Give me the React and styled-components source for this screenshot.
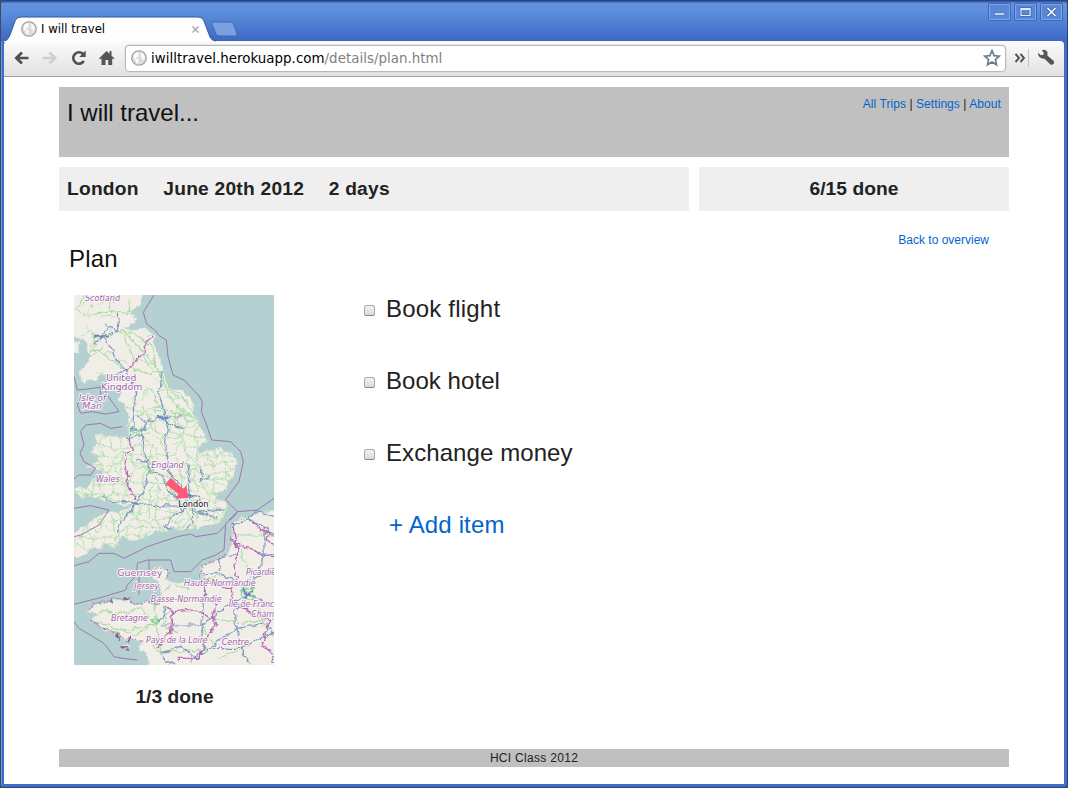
import React from 'react';
import styled, { createGlobalStyle } from 'styled-components';

const Global = createGlobalStyle`
  * { box-sizing: border-box; }
  body { margin: 0; background: #4a4a4c; overflow: hidden; }
`;
const Window = styled.div`
  width: 1068px; height: 788px; display: flex; flex-direction: column;
  background: #3f6dc6; border: 1px solid #27457f; border-left-color: #3c4a66;
  border-radius: 5px 5px 4px 4px; padding: 0 3px 3px 3px;
  font-family: 'Liberation Sans', Arial, sans-serif; color: #222;
  box-shadow: inset 1px 0 #6c99e4;
`;
const TitleBar = styled.div`
  height: 40px; flex: none; display: flex; justify-content: space-between; align-items: flex-start;
  margin: 0 -3px; padding: 0 4px 0 3px;
  background: linear-gradient(#315cab 0 1px, #6492df 2px, #5f8fdc 10px, #4370ca 34px, #3c68c0);
  border-radius: 4px 4px 0 0;
`;
const TabStrip = styled.div`display: flex; position: relative; height: 41px; width: 240px;`;
const TabShape = styled.svg`position: absolute; left: 0; top: 0;`;
const TabLabel = styled.div`
  position: relative; display: flex; align-items: center; height: 20px; margin-top: 18px; padding-left: 17px;
  font: 11.7px/20px 'DejaVu Sans', sans-serif; color: #000; width: 196px;
  svg + span { margin-left: 4px; flex: 1; }
`;
const WindowButtons = styled.div`display: flex; gap: 3px; padding-top: 2px;`;
const WindowButton = styled.div`
  width: 23px; height: 18px; border: 1px solid #3a67b8; border-radius: 2px;
  box-shadow: inset 0 0 0 1px #7da5e8; background: #5a87d7; display: grid; place-items: center;
`;
const Toolbar = styled.div`
  height: 36px; flex: none; display: flex; align-items: center; padding: 0 8px 1px 9px;
  background: linear-gradient(#fbfbfb, #e1e1e1); border-bottom: 1px solid #a3a3a3; border-radius: 4px 4px 0 0;
`;
const NavIcons = styled.div`display: flex; width: 112px;`;
const NavIcon = styled.svg`width: 18px; height: 18px; margin-right: 10.3px; flex: none;`;
const AddressBar = styled.div`
  width: 881px; height: 27px; border: 1px solid #b9b9b9; border-radius: 4px; background: #fff;
  box-shadow: 0 0 0 .5px #d8d8d8; display: flex; align-items: center; padding: 0 4px 0 5px;
  font: 13.4px/25px 'DejaVu Sans', sans-serif; letter-spacing: .025px; color: #808080;
  b { font-weight: 400; color: #000; }
`;
const Url = styled.span`flex: 1; margin-left: 4px;`;
const MoreIcons = styled.div`display: flex; align-items: center; margin-left: 8px;`;
const Separator = styled.i`width: 1px; height: 18px; background: #c4c4c4; margin: 0 8px 0 2px;`;
const Page = styled.div`flex: 1; background: #fff; padding: 10px 55px 0; overflow: hidden;`;
const Header = styled.header`
  height: 70px; background: #c0c0c0; padding: 11px 8px; display: flex; justify-content: space-between;
`;
const Title = styled.h1`margin: 0; font-size: 24px; font-weight: 400; line-height: 30px; color: #111;`;
const Links = styled.nav`font-size: 12px; line-height: 12px; white-space: pre; letter-spacing: .07px;`;
const Link = styled.a`color: #06c;`;
const Summary = styled.div`display: flex; gap: 10px; margin-top: 10px;`;
const SummaryBox = styled.div`
  width: ${p => p.$width}px; height: 44px; background: #efefef; display: flex; gap: 24.6px; padding: 0 8px;
  justify-content: ${p => (p.$center ? 'center' : 'flex-start')};
  font-size: 19.2px; line-height: 43px; font-weight: 700; letter-spacing: ${p => (p.$center ? 0.08 : 0.23)}px;
`;
const Heading = styled.div`display: flex; justify-content: space-between; padding: 22px 20px 0 10px; height: 84px;`;
const PlanTitle = styled.h2`margin: 11px 0 0; font-size: 24px; font-weight: 400; line-height: 30px; color: #111; letter-spacing: .15px;`;
const BackLink = styled(Link)`font-size: 12px; line-height: 14px;`;
const Content = styled.main`display: flex; height: 454px;`;
const MapColumn = styled.section`width: 200px; margin-left: 15px;`;
const MapCaption = styled.p`margin: 20px 0 0; text-align: center; font-size: 19.2px; line-height: 24px; font-weight: 700; letter-spacing: .05px; padding-left: 1px;`;
const MapPicture = styled.svg`display: block; width: 200px; height: 370px;`;
const List = styled.div`margin-left: 90px; font-size: 24px; line-height: 28px;`;
const Item = styled.label`display: flex; align-items: center; height: 28px; margin-bottom: 44px; letter-spacing: ${p => p.$spacing || 0}px;`;
const Check = styled.span`
  width: 11px; height: 11px; margin: 3px 11px 0 0; border: 1px solid #a9a9a9; border-bottom-color: #858585;
  border-radius: 2.5px; background: linear-gradient(#f3f3f3, #d9d9d9);
`;
const AddItem = styled(Link)`display: block; padding-left: 25px; letter-spacing: .15px;`;
const Footer = styled.footer`height: 18px; background: #c0c0c0; text-align: center; font-size: 12px; line-height: 18px; letter-spacing: .3px;`;

const Globe = () => (
  <svg width="16" height="16" viewBox="0 0 16 16">
    <circle cx="8" cy="8" r="7.3" fill="#dcdcdc" stroke="#999" strokeWidth="1.1" />
    <path d="M2.2 5.5 4 3 6.5 2 8.3 3 7 4.5 8 6 6.3 7.3 5 7 5.2 8.6 7.6 9.6 8 11 6.5 14 5.4 13.5 5 10.5 2.8 8.5Z M10 2.5 12.5 4 14 7 13.2 9.6 12 10.8 11.3 8.5 9.8 7.5 10.5 5.5 9.6 4.2Z" fill="#fafafa" />
  </svg>
);

const britain = 'M-20 -20H208V0L200 30 180 47 165 57 185 70 180 85 150 100 170 107 200 100 225 107 245 120 235 137 255 185 270 225 280 275 320 283 340 305 358 328 352 352 372 380 385 405 400 440 372 460 375 480 400 465 440 460 475 475 487 500 480 540 460 560 455 585 425 600 420 615 460 615 457 642 450 670 430 685 390 695 350 705 320 707 290 695 270 710 240 706 220 728 185 733 170 742 150 720 133 735 125 760 100 750 50 765 15 788 -20 790V715L0 715 40 690 80 655 140 650 183 628 150 632 110 622 80 616 50 600 20 605 5 595 5 580 40 575 60 555 95 525 60 520 40 515 75 500 65 475 45 475 70 445 60 420 85 420 130 425 165 430 160 400 165 370 150 330 130 315 145 290 110 285 90 275 110 255 150 250 130 235 90 240 60 255 70 262 45 250 30 267 15 235 20 225 40 205 50 180 30 135 10 125 -20 130Z';
const france = 'M630 640 575 650 530 662 480 680 475 700 477 735 470 755 460 780 420 797 380 820 375 840 400 850 380 856 340 860 300 865 280 850 283 825 262 818 238 820 235 830 242 850 255 870 260 895 268 925 240 932 220 920 180 930 160 910 155 920 120 915 90 925 50 932 42 950 75 960 50 975 75 982 77 997 90 1005 130 1012 155 1035 205 1040 195 1068 220 1080 228 1130H630Z';

// Minor roads form an irregular mesh that is clipped to the coastline.
const minorRoads = (() => {
  let seed = 17;
  const rnd = () => (seed = (seed * 16807) % 2147483647) / 2147483647;
  const pts = [];
  for (let r = 0; r < 29; r++) {
    pts.push([]);
    for (let c = 0; c < 19; c++) pts[r].push([Math.round(c * 28 - 10 + rnd() * 24), Math.round(r * 28 - 10 + rnd() * 24)]);
  }
  let d = '';
  for (let r = 0; r < 28; r++) for (let c = 0; c < 18; c++) {
    const dense = r > 11 ? 0.8 : 0.18;
    const [x, y] = pts[r][c];
    const go = q => { d += `M${x} ${y}Q${(x + q[0]) / 2 + rnd() * 8 - 4} ${(y + q[1]) / 2 + rnd() * 8 - 4} ${q[0]} ${q[1]}`; };
    if (rnd() < dense) go(pts[r][c + 1]);
    if (rnd() < dense) go(pts[r + 1][c]);
    if (rnd() < dense * 0.4) go(pts[r + 1][c + 1]);
  }
  return d;
})();

const greenRoads = 'M0 45 40 60 100 48 160 55 200 35M100 48 115 0M30 0 10 45M165 50 170 15M50 155 60 130 130 108 180 115 230 150 250 220M55 160 100 185 150 225M140 110 170 160 180 220 230 235 270 230M150 110 220 180 255 230M260 230 285 280 320 300 350 345M180 280 230 285 260 340M240 345 290 350 350 365M255 235 300 330 350 360M45 190 90 150M75 950 140 955 200 940 245 985 185 1020 80 985M245 985 260 1070 225 1040M250 985 240 940 265 895 290 870 350 880M120 1010 190 1000 245 985M260 1070 330 1070 410 1060M420 970 500 985 600 970M500 765 530 850 500 900M480 720 600 720M400 850 450 840 500 870M430 1090 500 1065 530 1110M290 940 265 990 310 1010M380 990 420 1050M530 870 570 1000';
const blueRoads = 'M60 122 85 120 135 108 130 58M85 120 60 150M85 120 115 165 135 205 160 230 185 290 180 360M97 85 102 97 85 120M102 97 130 104M130 235 155 228M262 230 260 275 252 290 270 345 272 360M180 360 175 400 165 430 205 420 215 380 195 365M215 380 260 370 325 360M260 370 300 395 325 400M170 400 205 405M205 420 215 480 225 520 215 570 185 625 215 630 340 635M275 360 280 400 272 440 280 480 285 530 330 585M225 520 270 550 285 590 335 635M190 492 220 500M345 510 350 560 342 620M380 515 380 560 405 545M340 600 380 605 375 635M340 635 300 660 270 690 290 705M355 635 355 680 335 705M360 645 400 650 450 645M320 645 315 610 350 605M370 650 430 670M90 600 110 620 150 620 185 625 170 655 140 675 130 715M190 625 170 650M478 690 520 670 570 695 600 720M520 670 545 650 600 660M570 695 570 790 540 850 525 900M570 725 590 740M380 840 440 835 500 875 525 900M440 825 430 790 490 780M390 850 395 880 380 990 260 990M380 990 390 1060 350 1100M380 990 410 970 480 920 525 900M525 900 480 950 495 1035 520 1100M525 900 570 920 600 925M255 980 275 960 270 940M255 1075 320 1055 370 1090 410 1060 500 1060 600 1010M410 1055 490 1000 575 985 600 1020M260 1080 300 1110M490 780 490 735M600 780 540 770M600 820 545 850';
const boundaries = 'M240 0 208 52 218 87 245 107 255 122 277 135 282 185 297 240 330 255 375 303 385 320 382 350 398 390 413 435 470 440 500 470 508 500 495 560 465 600 455 615 490 650 480 665 455 685 450 765 425 780 385 795 350 830 300 830 290 795 220 795 190 805 188 840 160 870 155 885 90 905 0 928M0 245 10 285 40 282 90 275 100 300 135 350 95 357 55 350 20 355 10 330 20 305M0 552 15 540 50 540 65 520 30 500 18 475 30 450 20 410 35 390 80 385 110 400 145 395M0 640 50 632 105 645 75 690 20 720 0 725M0 812 45 800 75 775 120 775 150 790 220 755 310 725 350 717 365 725 430 715 455 690M0 980 15 1000 65 1030 90 1045 120 1085 145 1090 190 1095M465 675 490 650 550 645 600 610';
const borders = 'M235 122 210 150 215 170 180 208 165 218 155 228M160 430 180 465 160 475 150 520 165 545 155 560 185 610M475 685 485 735 490 780 480 820 490 850 470 880 410 860 400 850M470 730 500 755 530 760 560 780 600 785M540 680 560 710 590 710 575 735 600 750M395 855 390 905 430 930 415 965 425 990 390 1040 375 1090 310 1090M270 935 295 950 370 945 410 970M295 950 290 1010 255 1055M470 880 480 920 540 960 590 975 575 1010 565 1050 600 1080';
const Label = ({ x, y, w, s = 27.5, upright, children }) => (
  <text x={x} y={y} textLength={w} lengthAdjust="spacingAndGlyphs" fontSize={s} fontStyle={upright ? 'normal' : 'italic'}>{children}</text>
);
const MapView = () => (
  <MapPicture viewBox="0 0 600 1110">
    <defs>
      <clipPath id="land"><path d={britain} /></clipPath>
      <filter id="winding" filterUnits="userSpaceOnUse" x="-20" y="-20" width="640" height="1150" colorInterpolationFilters="sRGB">
        <feTurbulence type="fractalNoise" baseFrequency=".045" numOctaves="3" seed="4" result="n" />
        <feDisplacementMap in="SourceGraphic" in2="n" scale="20" xChannelSelector="R" yChannelSelector="G" />
      </filter>
    </defs>
    <rect width="600" height="1110" fill="#b5d0d0" />
    <g filter="url(#winding)">
      <g fill="#f1eee8" stroke="#d9dfd5" strokeWidth="2">
        <path d={britain} /><path d={france} />
        <path d="M-20 130 15 145 18 170 5 172-20 165ZM35 310 65 308 55 335 35 342ZM145 1055 165 1050 160 1065Z" />
      </g>
      <g fill="none" strokeLinecap="round" strokeLinejoin="round">
        <path clipPath="url(#land)" d={minorRoads} stroke="#b2dfad" strokeWidth="2.8" />
        <path d={greenRoads} stroke="#a8dba4" strokeWidth="3.4" />
        <path d="M220 515h18v16h-18zM245 985l15-10-25-5zM500 890l35-20 5 45-30-5zM170 400l20 12 25-12M258 232h12" stroke="#88d78f" strokeWidth="4" />
        <path d={blueRoads} stroke="#8099c3" strokeWidth="3.7" />
        <path d="M62 122h40M250 368l30 4M505 885l25 15M515 905l20-15M178 624l14 6M335 605l20 0" stroke="#6686bb" strokeWidth="6" />
        <path d={borders} stroke="#b565b1" strokeWidth="4" strokeDasharray="13 4 5 4" />
        <path d="M45 945 55 925 85 920 120 910 165 912 185 928 220 920 260 930M50 975 75 995 130 1015 165 1037 205 1035M235 825 280 820 285 850M375 845 385 815 420 797 465 777" stroke="#a583aa" strokeWidth="3.4" strokeDasharray="5 6" />
        <path d="M150 908l12 8M110 915l8 6M145 1058l16 4M165 1030l-5 12M130 1020l3 15" stroke="#80528e" strokeWidth="5" />
      </g>
    </g>
    <g fill="none" strokeLinejoin="round" stroke="#9b75aa" strokeWidth="2.9">
      <path d={boundaries} /><path d="M225 795v35M195 840v60M80 275v30" />
    </g>
    <g fill="#9c68a4" stroke="#fbf5fa" strokeWidth="6" paintOrder="stroke" strokeLinejoin="round" fontFamily="'DejaVu Sans', sans-serif">
      <Label x={33} y={18} w={105}>Scotland</Label>
      <Label x={97} y={258} w={90} upright>United</Label>
      <Label x={81} y={285} w={124} upright>Kingdom</Label>
      <Label x={14} y={317} w={82}>Isle of</Label>
      <Label x={25} y={342} w={59}>Man</Label>
      <Label x={232} y={520} w={97}>England</Label>
      <Label x={65} y={561} w={72}>Wales</Label>
      <Label x={130} y={843} w={135} upright>Guernsey</Label>
      <Label x={181} y={883} w={75}>Jersey</Label>
      <Label x={516} y={841} w={90}>Picardie</Label>
      <Label x={330} y={874} w={215}>Haute-Normandie</Label>
      <Label x={230} y={921} w={213}>Basse-Normandie</Label>
      <Label x={464} y={936} w={151}>Île-de-France</Label>
      <Label x={532} y={966} w={68}>Cham</Label>
      <Label x={111} y={977} w={111}>Bretagne</Label>
      <Label x={216} y={1045} w={185}>Pays de la Loire</Label>
      <Label x={443} y={1050} w={82}>Centre</Label>
      <Label x={591} y={1103} w={17}>B</Label>
      <g fill="#111"><Label x={313} y={635} w={90} upright>London</Label></g>
    </g>
    <path d="M290 548 328 583 337 570 343 609 304 609 314 598 275 567Z" fill="#ff5874" />
  </MapPicture>
);

export default function App() {
  return (
    <>
      <Global />
      <Window>
        <TitleBar>
          <TabStrip>
            <TabShape width="240" height="41">
              <path d="M0 41Q4 39 6 34L11 20Q12 16 17 16H194Q199 16 200 20L206 36Q208 40 212 40" fill="#fefefe" stroke="#31569f" strokeWidth="1" />
              <path d="M0 41H209" stroke="#fbfbfb" strokeWidth="2" />
              <path d="M209 21H226Q229 21 230 24L233 33Q233 35 231 35H216Q213 35 212 33L208 23Q207 21 209 21Z" fill="#7ba0df" stroke="#3f69b8" />
            </TabShape>
            <TabLabel><Globe /><span>I will travel</span>
              <svg width="9" height="9" viewBox="0 0 9 9"><path d="m1.5 1.5 6 6m0-6-6 6" stroke="#a5a5a5" strokeWidth="1.4" /></svg>
            </TabLabel>
          </TabStrip>
          <WindowButtons>
            <WindowButton><svg width="13" height="12"><path d="M1.500 7h10v2h-10z" fill="#fff" stroke="#3f69b5" strokeWidth=".6" /></svg></WindowButton>
            <WindowButton><svg width="13" height="12"><path d="M2 2.500h9v7H2z" fill="none" stroke="#446fbd" strokeWidth="3" /><path d="M2 2.500h9v7H2zM2 3.500h9" fill="none" stroke="#e6eefb" strokeWidth="1.200" /></svg></WindowButton>
            <WindowButton><svg width="13" height="12"><path d="m2.500 2 8 8m0-8-8 8" stroke="#3d68b5" strokeWidth="3.200" /><path d="m2.500 2 8 8m0-8-8 8" stroke="#f4f8ff" strokeWidth="1.700" /></svg></WindowButton>
          </WindowButtons>
        </TitleBar>
        <Toolbar>
          <NavIcons>
            <NavIcon viewBox="0 0 18 18"><path d="M15.500 9H3.500m5.500-5.500L3.300 9l5.700 5.500" fill="none" stroke="#505050" strokeWidth="2.700" /></NavIcon>
            <NavIcon viewBox="0 0 18 18"><path d="M1.500 9h12M8.500 3.500 14.200 9l-5.700 5.500" fill="none" stroke="#cfcfcf" strokeWidth="2.700" /></NavIcon>
            <NavIcon viewBox="0 0 18 18"><path d="M13 5A5.700 5.700 0 1 0 13.800 12" fill="none" stroke="#505050" strokeWidth="2.600" /><path d="M15.700 1.500V8H9.200Z" fill="#505050" /></NavIcon>
            <NavIcon viewBox="0 0 18 18"><path d="M1 9.500 8.500 2l3 2.700V2h2v4.500l3 3-1 .8-1.300-.8V16h-4v-5H7.500v5H3.500V9.500l-1.300.8Z" fill="#555" /></NavIcon>
          </NavIcons>
          <AddressBar>
            <Globe /><Url><b>iwilltravel.herokuapp.com</b>/details/plan.html</Url>
            <svg width="18" height="18" viewBox="0 0 18 18"><path d="m9 1.700 2.100 4.900 5.200.5-3.900 3.500 1.100 5.200L9 13.100l-4.500 2.700 1.100-5.200-3.900-3.500 5.200-.5Z" fill="#fff" stroke="#6b7994" strokeWidth="1.700" /></svg>
          </AddressBar>
          <MoreIcons>
            <svg width="12" height="12"><path d="m1.500 2 3.500 4-3.500 4M6.500 2 10 6l-3.500 4" fill="none" stroke="#505050" strokeWidth="1.900" /></svg>
            <Separator />
            <svg width="18" height="18" viewBox="0 0 18 18"><path d="M4.800 1.500Q8-.2 10 2.500 11 4 10.300 6.500L16.500 11.800Q17.700 13.500 16.400 15 15 16.500 13.200 15.200L7.200 9.600Q4.800 10 2.800 8.300 .7 6.500 1.200 4L4 6.300 6.500 5.800 6.800 3.700Z" fill="#555" /></svg>
          </MoreIcons>
        </Toolbar>
        <Page>
          <Header>
            <Title>I will travel...</Title>
            <Links><Link>All Trips</Link> | <Link>Settings</Link> | <Link>About</Link></Links>
          </Header>
          <Summary>
            <SummaryBox $width={630}><span>London</span><span>June 20th 2012</span><span>2 days</span></SummaryBox>
            <SummaryBox $width={310} $center><span>6/15 done</span></SummaryBox>
          </Summary>
          <Heading><PlanTitle>Plan</PlanTitle><BackLink>Back to overview</BackLink></Heading>
          <Content>
            <MapColumn><MapView /><MapCaption>1/3 done</MapCaption></MapColumn>
            <List>
              <Item $spacing={0.2}><Check />Book flight</Item>
              <Item $spacing={0.05}><Check />Book hotel</Item>
              <Item $spacing={0.08}><Check />Exchange money</Item>
              <AddItem>+ Add item</AddItem>
            </List>
          </Content>
          <Footer>HCI Class 2012</Footer>
        </Page>
      </Window>
    </>
  );
}
